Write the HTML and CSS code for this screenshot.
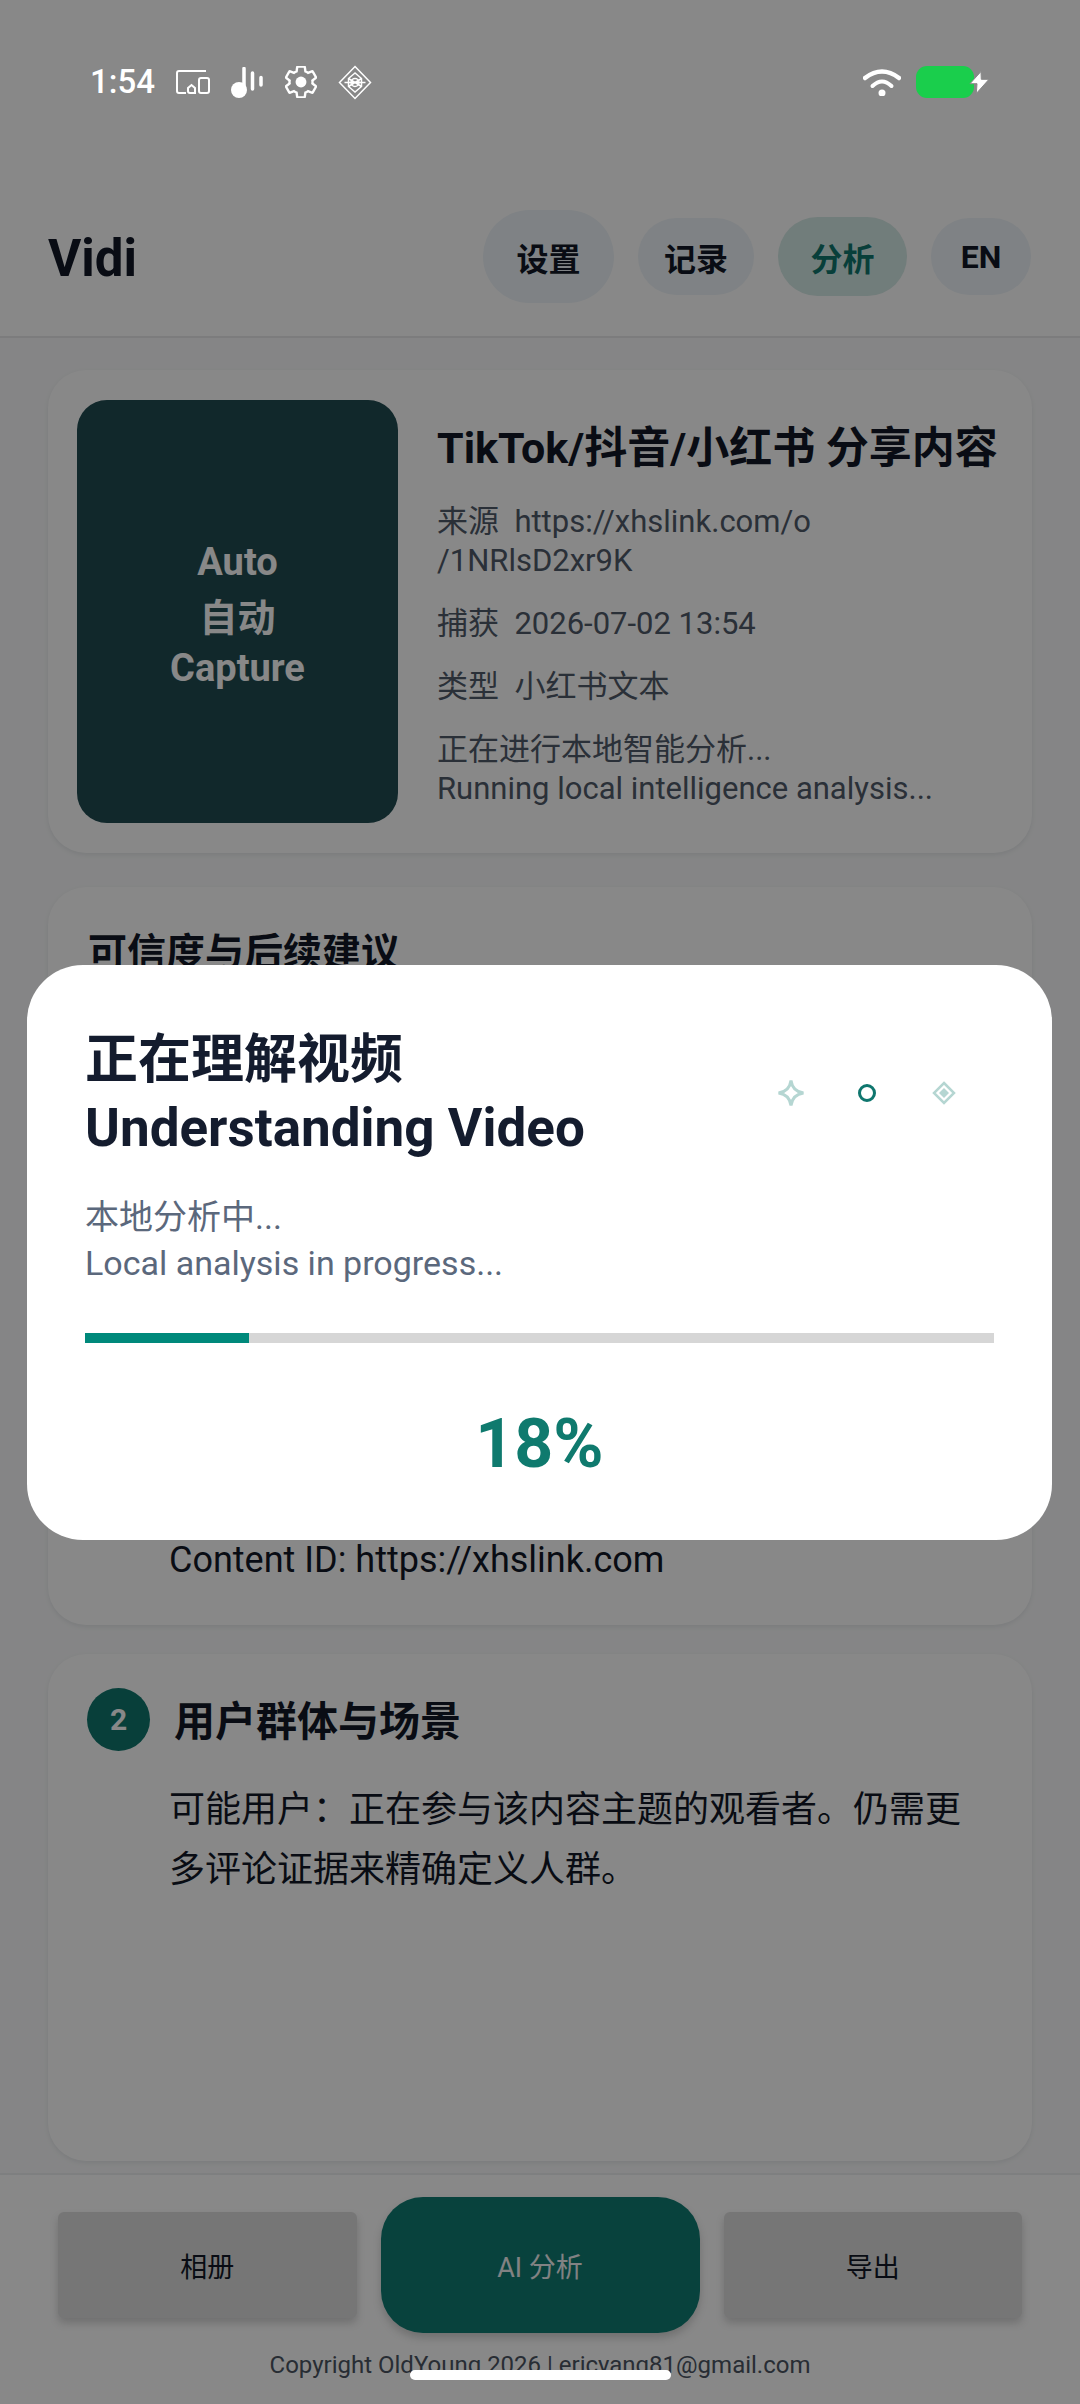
FILE: index.html
```html
<!doctype html>
<html>
    <head>
        <meta charset="utf-8">
        <title>Vidi</title>
        <link rel="stylesheet" href="styles.css">
    </head>
    <body>
        <div class="page">
            <header class="topbar">
                <div class="statusbar">
                    <div class="status-left">
                        <span class="time">1:54</span>
                        <svg class="icon-devices" viewBox="0 0 34 24"><path d="M30 1H3a2 2 0 0 0-2 2v18a2 2 0 0 0 2 2h7M19 23h-5a2 2 0 0 1-2-2v-3l3.500-3 3.500 3z"/><rect x="23" y="8" width="10" height="15" rx="2"/></svg>
                        <svg class="icon-music" viewBox="0 0 33 31"><circle cx="8" cy="23" r="8"/><path d="M13 1.500V23M21.500 6v16M30 10.500v7.500"/></svg>
                        <svg class="icon-gear" viewBox="2 2 20 20"><path d="M19.140 12.940c.040-.300.060-.610.060-.940 0-.320-.020-.640-.070-.940l2.030-1.580c.180-.140.230-.410.120-.610l-1.920-3.320c-.120-.220-.370-.290-.590-.220l-2.390.960c-.500-.380-1.030-.700-1.620-.940l-.360-2.540c-.040-.240-.240-.410-.480-.410h-3.840c-.240 0-.430.170-.470.410l-.360 2.540c-.590.240-1.130.570-1.620.940l-2.390-.960c-.220-.080-.470 0-.590.220L2.740 8.870c-.120.210-.080.470.120.610l2.030 1.580c-.050.300-.090.630-.090.940s.020.640.070.940l-2.030 1.580c-.180.140-.230.410-.12.610l1.920 3.320c.120.220.370.290.590.220l2.390-.960c.500.380 1.030.700 1.620.940l.360 2.540c.050.240.240.410.48.410h3.840c.240 0 .440-.170.470-.410l.360-2.540c.590-.240 1.130-.560 1.620-.940l2.390.960c.220.080.470 0 .590-.220l1.920-3.320c.120-.220.070-.470-.120-.610l-2.010-1.580z"/><circle cx="12" cy="12" r="3.400"/></svg>
                        <svg class="icon-diamond" viewBox="0 0 34 35"><path d="M17 1.500L32.500 17.500 17 33.500 1.500 17.500zM17 8L10.500 13.500V21.500L17 27 23.500 21.500V13.500zM6.500 17.500H27.500M10.500 13.500L23.500 21.500M23.500 13.500L10.500 21.500"/><circle cx="17" cy="17.500" r="4"/></svg>
                    </div>
                    <div class="status-right">
                        <svg class="icon-wifi" viewBox="0 0 38 28"><path class="wifi-outer" d="M2 10Q19-3 36 10"/><path class="wifi-inner" d="M9.500 18Q19 9 28.500 18"/><circle cx="19" cy="25" r="3.500"/></svg>
                        <div class="battery"></div>
                        <svg class="icon-bolt" viewBox="0 0 21 23"><path d="M12 .500L1 12.700H8L7.300 22.500 20 8.300H12.300z"/></svg>
                    </div>
                </div>
                <div class="appbar">
                    <h1 class="brand">Vidi</h1>
                    <nav class="tabs">
                        <button class="tab tab-settings">设置</button>
                        <button class="tab tab-history">记录</button>
                        <button class="tab tab-analysis">分析</button>
                        <button class="tab tab-lang">EN</button>
                    </nav>
                </div>
            </header>

            <main class="content">
                <section class="card source-card">
                    <div class="thumb">
                        <span>Auto</span>
                        <span class="thumb-cjk">自动</span>
                        <span>Capture</span>
                    </div>
                    <div class="source-info">
                        <h2 class="source-title">TikTok/抖音/小红书 分享内容</h2>
                        <p class="meta">来源&nbsp; https://xhslink.com/o<br>/1NRlsD2xr9K</p>
                        <p class="meta">捕获&nbsp; 2026-07-02 13:54</p>
                        <p class="meta">类型&nbsp; 小红书文本</p>
                        <p class="meta">正在进行本地智能分析...<br>Running local intelligence analysis...</p>
                    </div>
                </section>

                <section class="card trust-card">
                    <h2 class="trust-title">可信度与后续建议</h2>
                    <p class="body-text trust-line">Content ID: https://xhslink.com</p>
                </section>

                <section class="card audience-card">
                    <div class="step-head">
                        <span class="step-num">2</span>
                        <h2 class="step-title">用户群体与场景</h2>
                    </div>
                    <p class="body-text">可能用户：正在参与该内容主题的观看者。仍需更多评论证据来精确定义人群。</p>
                </section>
            </main>

            <footer class="bottombar">
                <div class="actions">
                    <button class="action">相册</button>
                    <button class="action action-main">AI 分析</button>
                    <button class="action">导出</button>
                </div>
                <p class="copyright">Copyright OldYoung 2026 | ericyang81@gmail.com</p>
            </footer>

            <div class="scrim">
                <div class="dialog">
                    <div class="dialog-head">
                        <h2 class="dialog-title">正在理解视频<br>Understanding Video</h2>
                        <div class="sparkles">
                            <svg class="spark-star" viewBox="0 0 28 28"><path d="M14 1.500Q15.500 12.500 26.500 14 15.500 15.500 14 26.500 12.500 15.500 1.500 14 12.500 12.500 14 1.500z"/></svg>
                            <svg class="spark-ring" viewBox="0 0 20 20"><circle cx="10" cy="10" r="7.500"/></svg>
                            <svg class="spark-gem" viewBox="0 0 24 24"><path class="gem-edge" d="M12 2L22 12 12 22 2 12z"/><path class="gem-core" d="M12 7L17 12 12 17 7 12z"/></svg>
                        </div>
                    </div>
                    <p class="dialog-sub">本地分析中...<br>Local analysis in progress...</p>
                    <div class="progress"><div class="progress-fill" style="width: 18%"></div></div>
                    <div class="percent">18%</div>
                </div>
            </div>

            <div class="homebar"></div>
        </div>
    </body>
</html>
```
FILE: styles.css
```css
* {
    box-sizing: border-box;
}
html,
body {
    margin: 0;
    padding: 0;
    overflow: hidden;
}
body {
    font-family: Roboto, "Noto Sans CJK SC", sans-serif;
    color: #111827;
}
h1,
h2,
p {
    margin: 0;
}
button {
    font-family: inherit;
    border: 0;
    padding: 0;
}
.page {
    position: relative;
    width: 1080px;
    height: 2404px;
    display: flex;
    flex-direction: column;
    background: #f9fafb;
    overflow: hidden;
}

/* top */
.topbar {
    height: 338px;
    flex: none;
    background: #ffffff;
    border-bottom: 2px solid #e8e9eb;
}
.statusbar {
    position: relative;
    z-index: 3;
    height: 162px;
    padding: 64px 90px 0 90px;
    display: flex;
    justify-content: space-between;
    align-items: flex-start;
}
.status-left {
    display: flex;
    align-items: center;
    gap: 21px;
    height: 36px;
}
.status-right {
    display: flex;
    align-items: center;
    height: 36px;
}
.time {
    font-size: 33px;
    font-weight: 500;
    color: #ffffff;
    line-height: 36px;
    width: 65px;
}
.statusbar svg {
    display: block;
    flex: none;
}
.icon-devices {
    width: 34px;
    height: 24px;
    fill: none;
    stroke: #ffffff;
    stroke-width: 2;
}
.icon-music {
    width: 33px;
    height: 31px;
    fill: #ffffff;
    stroke: #ffffff;
    stroke-width: 0;
}
.icon-music path {
    fill: none;
    stroke-width: 3.500;
    stroke-linecap: round;
}
.icon-gear {
    width: 32px;
    height: 32px;
    fill: none;
    stroke: #ffffff;
    stroke-width: 1.500;
}
.icon-gear circle {
    fill: #ffffff;
    stroke: none;
}
.icon-diamond {
    width: 34px;
    height: 35px;
    fill: none;
    stroke: #ffffff;
    stroke-width: 1.500;
}
.icon-wifi {
    width: 38px;
    height: 28px;
    fill: #ffffff;
}
.icon-wifi path {
    fill: none;
    stroke: #ffffff;
    stroke-linecap: round;
}
.wifi-outer {
    stroke-width: 4.500;
}
.wifi-inner {
    stroke-width: 4;
}
.battery {
    width: 58px;
    height: 32px;
    margin-left: 15px;
    border-radius: 11px;
    background: #1ace4c;
}
.icon-bolt {
    width: 21px;
    height: 23px;
    margin-left: -5px;
    fill: #ffffff;
    stroke: #888888;
    stroke-width: 1;
}
.appbar {
    height: 174px;
    padding: 0 49px 0 48px;
    display: flex;
    justify-content: space-between;
    align-items: flex-start;
}
.brand {
    margin-top: 68px;
    font-size: 51px;
    line-height: 58px;
    font-weight: 700;
}
.tabs {
    margin-top: 48px;
    display: flex;
    align-items: center;
    gap: 24px;
}
.tab {
    height: 77px;
    border-radius: 40px;
    font-size: 32px;
    font-weight: 700;
    color: #111827;
    background: #eef4f9;
}
.tab-settings {
    width: 131px;
    height: 93px;
    border-radius: 47px;
}
.tab-history {
    width: 116px;
}
.tab-analysis {
    width: 129px;
    height: 79px;
    color: #0f766e;
    background: #d5eae6;
}
.tab-lang {
    width: 100px;
}

/* cards */
.content {
    flex: 1;
    padding: 32px 48px 0 48px;
    min-height: 0;
    overflow: hidden;
}
.card {
    background: #ffffff;
    border-radius: 38px;
    box-shadow: 0 2px 5px rgba(17, 24, 39, 0.08);
}
.source-card {
    height: 483px;
    margin-bottom: 34px;
    padding: 30px 30px 30px 29px;
    display: flex;
    gap: 39px;
}
.thumb {
    width: 321px;
    flex: none;
    border-radius: 30px;
    background: #204b51;
    color: #ffffff;
    padding-top: 7px;
    display: flex;
    flex-direction: column;
    justify-content: center;
    align-items: center;
    font-size: 38px;
    font-weight: 700;
    line-height: 50px;
}
.thumb-cjk {
    margin-top: 6px;
}
.source-info {
    padding-top: 22px;
    min-width: 0;
    white-space: nowrap;
}
.source-title {
    font-size: 43px;
    line-height: 52px;
    font-weight: 700;
    margin-bottom: 28px;
}
.meta {
    font-size: 31px;
    line-height: 39px;
    color: #505a69;
    margin-bottom: 24px;
}
.body-text {
    font-size: 36px;
    line-height: 60px;
    color: #111827;
}
.trust-card {
    height: 738px;
    margin-bottom: 29px;
    padding: 38px 40px 42px 40px;
    display: flex;
    flex-direction: column;
    justify-content: space-between;
}
.trust-title {
    font-size: 39px;
    line-height: 56px;
    font-weight: 700;
}
.trust-line {
    padding-left: 81px;
    line-height: 46px;
}
.audience-card {
    height: 507px;
    padding: 34px 60px 0 39px;
}
.step-head {
    display: flex;
    align-items: center;
    gap: 24px;
    margin-bottom: 29px;
}
.step-num {
    width: 63px;
    height: 63px;
    border-radius: 50%;
    background: #0f766e;
    color: #ffffff;
    font-size: 30px;
    font-weight: 700;
    display: flex;
    align-items: center;
    justify-content: center;
}
.step-title {
    padding-top: 4px;
    font-size: 41px;
    line-height: 56px;
    font-weight: 700;
}
.audience-card .body-text {
    padding-left: 82px;
}

/* bottom */
.bottombar {
    height: 231px;
    flex: none;
    background: #ffffff;
    border-top: 2px solid #eceef0;
    padding: 22px 58px 0 58px;
}
.actions {
    display: flex;
    align-items: center;
    gap: 24px;
}
.action {
    flex: 1;
    height: 106px;
    border-radius: 6px;
    background: #dddddd;
    color: #111827;
    font-size: 27px;
    box-shadow: 0 5px 8px rgba(0, 0, 0, 0.18);
}
.action-main {
    flex: none;
    width: 319px;
    height: 136px;
    border-radius: 42px;
    background: #0f7c73;
    color: #f3f4f6;
}
.copyright {
    margin-top: 17px;
    text-align: center;
    font-size: 24px;
    line-height: 30px;
    color: #4b5563;
}

/* loading dialog */
.scrim {
    position: absolute;
    inset: 0;
    z-index: 2;
    padding: 965px 28px 0 27px;
    background: rgba(0, 0, 0, 0.465);
}
.dialog {
    height: 575px;
    border-radius: 56px;
    background: #ffffff;
    padding: 61px 58px 0 58px;
}
.dialog-head {
    display: flex;
    justify-content: space-between;
    align-items: center;
}
.dialog-title {
    font-size: 53px;
    line-height: 68px;
    font-weight: 700;
    color: #141c2e;
}
.sparkles {
    display: flex;
    align-items: center;
    padding-right: 38px;
    padding-bottom: 3px;
}
.spark-star {
    width: 28px;
    height: 28px;
    margin-right: 52px;
    fill: none;
    stroke: #b5d6d2;
    stroke-width: 3;
}
.spark-ring {
    width: 20px;
    height: 20px;
    margin-right: 55px;
    fill: none;
    stroke: #0f766e;
    stroke-width: 3;
}
.spark-gem {
    width: 24px;
    height: 24px;
}
.gem-edge {
    fill: none;
    stroke: #b5d6d2;
    stroke-width: 2.500;
}
.gem-core {
    fill: #b5d6d2;
}
.dialog-sub {
    margin-top: 32px;
    font-size: 34px;
    line-height: 46px;
    color: #5b687c;
}
.progress {
    margin-top: 47px;
    height: 10px;
    background: #d6d6d6;
}
.progress-fill {
    height: 100%;
    background: #00897b;
}
.percent {
    margin-top: 61px;
    text-align: center;
    font-size: 68px;
    line-height: 80px;
    font-weight: 700;
    color: #0f7a6e;
}
.homebar {
    position: absolute;
    z-index: 3;
    left: 410px;
    top: 2370px;
    width: 261px;
    height: 10px;
    border-radius: 5px;
    background: #ffffff;
}
```
